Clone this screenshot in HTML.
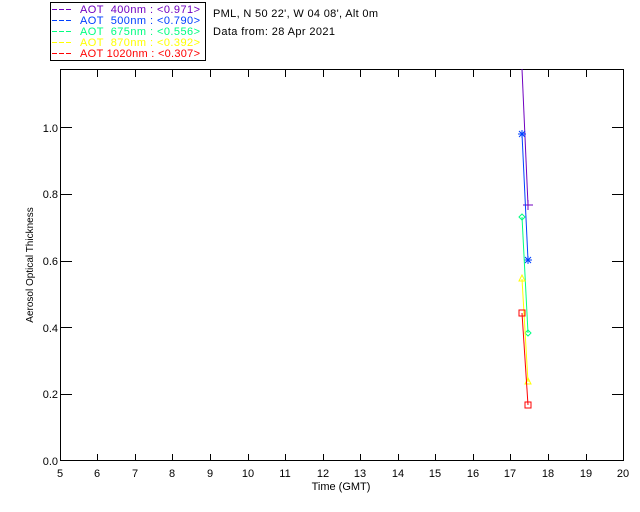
<!DOCTYPE html>
<html><head><style>
html,body{margin:0;padding:0;background:#fff;}
svg{display:block;font-family:"Liberation Sans",sans-serif;font-size:11px;}
</style></head><body>
<svg width="640" height="512" viewBox="0 0 640 512">
<rect width="640" height="512" fill="#fff"/>
<rect x="50.5" y="2.5" width="155" height="58" fill="none" stroke="#000"/>
<g font-size="11">
<path d="M52 9.5h5M59 9.5h5M66 9.5h5" stroke="#7000c0"/>
<text x="80" y="13" fill="#7000c0" textLength="120" xml:space="preserve">AOT  400nm : &lt;0.971&gt;</text>
<path d="M52 20.5h5M59 20.5h5M66 20.5h5" stroke="#0040ff"/>
<text x="80" y="24" fill="#0040ff" textLength="120" xml:space="preserve">AOT  500nm : &lt;0.790&gt;</text>
<path d="M52 31.5h5M59 31.5h5M66 31.5h5" stroke="#00ff80"/>
<text x="80" y="35" fill="#00ff80" textLength="120" xml:space="preserve">AOT  675nm : &lt;0.556&gt;</text>
<path d="M52 42.5h5M59 42.5h5M66 42.5h5" stroke="#ffff00"/>
<text x="80" y="46" fill="#ffff00" textLength="120" xml:space="preserve">AOT  870nm : &lt;0.392&gt;</text>
<path d="M52 53.5h5M59 53.5h5M66 53.5h5" stroke="#ff0000"/>
<text x="80" y="57" fill="#ff0000" textLength="120" xml:space="preserve">AOT 1020nm : &lt;0.307&gt;</text>
</g>
<text x="213" y="17" fill="#000" textLength="165">PML, N 50 22', W 04 08', Alt 0m</text>
<text x="213" y="35" fill="#000" textLength="122">Data from: 28 Apr 2021</text>
<rect x="60.5" y="69.5" width="563" height="391" fill="none" stroke="#000"/>
<g stroke="#000" shape-rendering="crispEdges">
<path d="M97.5 461v-7M135.5 461v-7M172.5 461v-7M210.5 461v-7M248.5 461v-7M285.5 461v-7M323.5 461v-7M360.5 461v-7M398.5 461v-7M435.5 461v-7M473.5 461v-7M510.5 461v-7M548.5 461v-7M586.5 461v-7"/>
<path d="M97.5 70v7M135.5 70v7M172.5 70v7M210.5 70v7M248.5 70v7M285.5 70v7M323.5 70v7M360.5 70v7M398.5 70v7M435.5 70v7M473.5 70v7M510.5 70v7M548.5 70v7M586.5 70v7"/>
<path d="M61 394.5h11M61 327.5h11M61 261.5h11M61 194.5h11M61 127.5h11"/>
<path d="M623 394.5h-11M623 327.5h-11M623 261.5h-11M623 194.5h-11M623 127.5h-11"/>
</g>
<g text-anchor="middle" fill="#000">
<text x="60" y="477">5</text><text x="97" y="477">6</text><text x="135" y="477">7</text><text x="172" y="477">8</text><text x="210" y="477">9</text><text x="248" y="477">10</text><text x="285" y="477">11</text><text x="323" y="477">12</text><text x="360" y="477">13</text><text x="398" y="477">14</text><text x="435" y="477">15</text><text x="473" y="477">16</text><text x="510" y="477">17</text><text x="548" y="477">18</text><text x="586" y="477">19</text><text x="623" y="477">20</text>
<text x="341" y="490">Time (GMT)</text>
</g>
<g text-anchor="end" fill="#000">
<text x="58" y="465">0.0</text><text x="58" y="398">0.2</text><text x="58" y="332">0.4</text><text x="58" y="265">0.6</text><text x="58" y="198">0.8</text><text x="58" y="132">1.0</text>
</g>
<text transform="translate(33,265) rotate(-90)" text-anchor="middle" font-size="10" fill="#000">Aerosol Optical Thickness</text>
<g fill="none" stroke-width="1">
<polyline points="522,69 528,205" stroke="#7000c0"/>
<path d="M523 205h10M528 200v10" stroke="#7000c0"/>
<polyline points="522,134 528,260" stroke="#0040ff"/>
<path d="M518 134h8M522 130v8M519 131l6 6M525 131l-6 6M524 260h8M528 256v8M525 257l6 6M531 257l-6 6" stroke="#0040ff"/>
<polyline points="522,217 528,333" stroke="#00ff80"/>
<path d="M522 214l3 3-3 3-3-3zM528 330l3 3-3 3-3-3z" stroke="#00ff80"/>
<polyline points="522,279 528,382" stroke="#ffff00"/>
<path d="M522 275l3 6h-6zM528 378l3 6h-6z" stroke="#ffff00"/>
<polyline points="522,313 528,405" stroke="#ff0000"/>
<rect x="519" y="310" width="6" height="6" stroke="#ff0000"/>
<rect x="525" y="402" width="6" height="6" stroke="#ff0000"/>
</g>
</svg>
</body></html>
